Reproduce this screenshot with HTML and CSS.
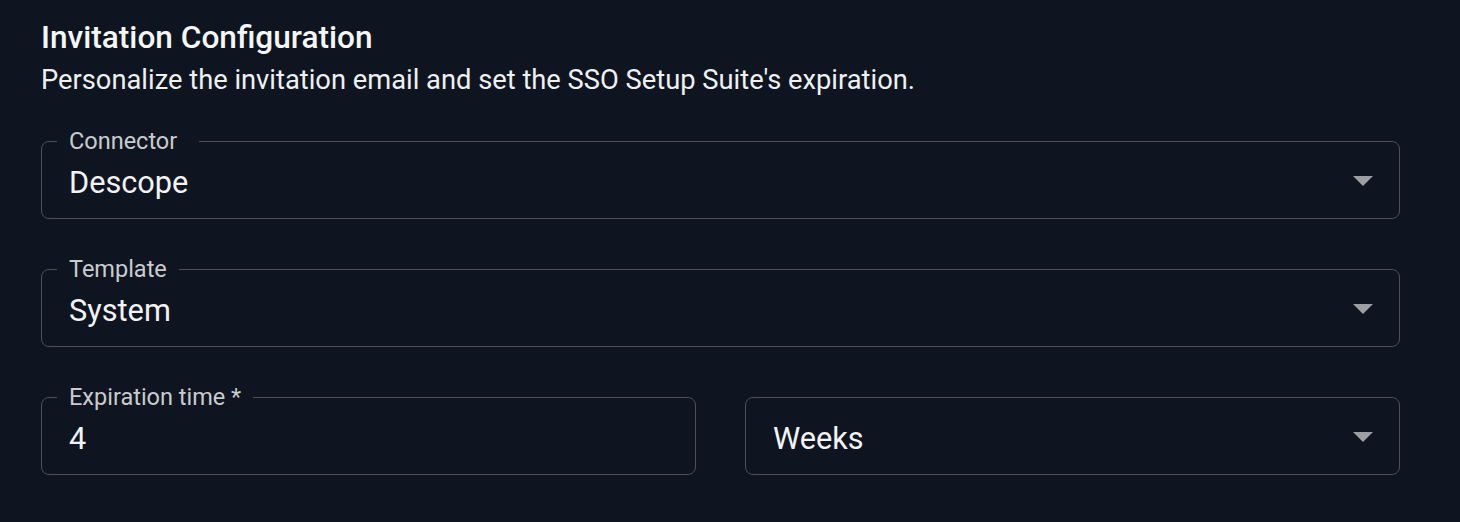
FILE: index.html
```html
<!DOCTYPE html>
<html lang="en">
<head>
<meta charset="utf-8">
<title>Invitation Configuration</title>
<link rel="stylesheet" href="styles.css">
</head>
<body>
<main class="page">
  <h1 class="title">Invitation Configuration</h1>
  <p class="subtitle">Personalize the invitation email and set the SSO Setup Suite's expiration.</p>
  <div class="fields">
    <div class="field">
      <span class="label label--wide">Connector</span>
      <span class="value">Descope</span>
      <svg class="arrow" width="20" height="10" viewBox="0 0 20 10"><path d="M0 0H20L10 10Z"/></svg>
    </div>
    <div class="field">
      <span class="label">Template</span>
      <span class="value">System</span>
      <svg class="arrow" width="20" height="10" viewBox="0 0 20 10"><path d="M0 0H20L10 10Z"/></svg>
    </div>
    <div class="row">
      <div class="field">
        <span class="label">Expiration time *</span>
        <span class="value">4</span>
      </div>
      <div class="field">
        <span class="value">Weeks</span>
        <svg class="arrow" width="20" height="10" viewBox="0 0 20 10"><path d="M0 0H20L10 10Z"/></svg>
      </div>
    </div>
  </div>
</main>
</body>
</html>
```
FILE: styles.css
```css
html, body {
  margin: 0;
  background: #0f1520;
}
body {
  font-family: Roboto, "Liberation Sans", sans-serif;
  color: #f2f3f5;
}
.page {
  width: 1359px;
  padding: 20px 0 0 41px;
}
.title {
  margin: 0;
  font-size: 31.6px;
  line-height: 36px;
  font-weight: 500;
  color: #f5f6f7;
}
.subtitle {
  margin: 8px 0 0;
  font-size: 27.3px;
  line-height: 32px;
  font-weight: 400;
  color: #eef0f2;
}
.fields {
  margin-top: 45px;
  display: flex;
  flex-direction: column;
  gap: 50px;
}
.row {
  display: grid;
  grid-template-columns: 655px 655px;
  gap: 49px;
}
.field {
  position: relative;
  box-sizing: border-box;
  height: 78px;
  border: 1px solid #4a4f59;
  border-radius: 8px;
  padding: 5px 26px 0 27px;
  display: flex;
  align-items: center;
}
.label {
  position: absolute;
  top: -15px;
  left: 15px;
  padding: 0 12px;
  background: #0f1520;
  font-size: 23.5px;
  line-height: 28px;
  color: #c9cbcf;
  white-space: nowrap;
}
.label--wide {
  padding-right: 22px;
}
.value {
  flex: 1;
  font-size: 30.7px;
  line-height: 36px;
  color: #f2f3f5;
}
.arrow {
  flex: none;
  margin-top: -4px;
  fill: #9b9ea5;
}
```
